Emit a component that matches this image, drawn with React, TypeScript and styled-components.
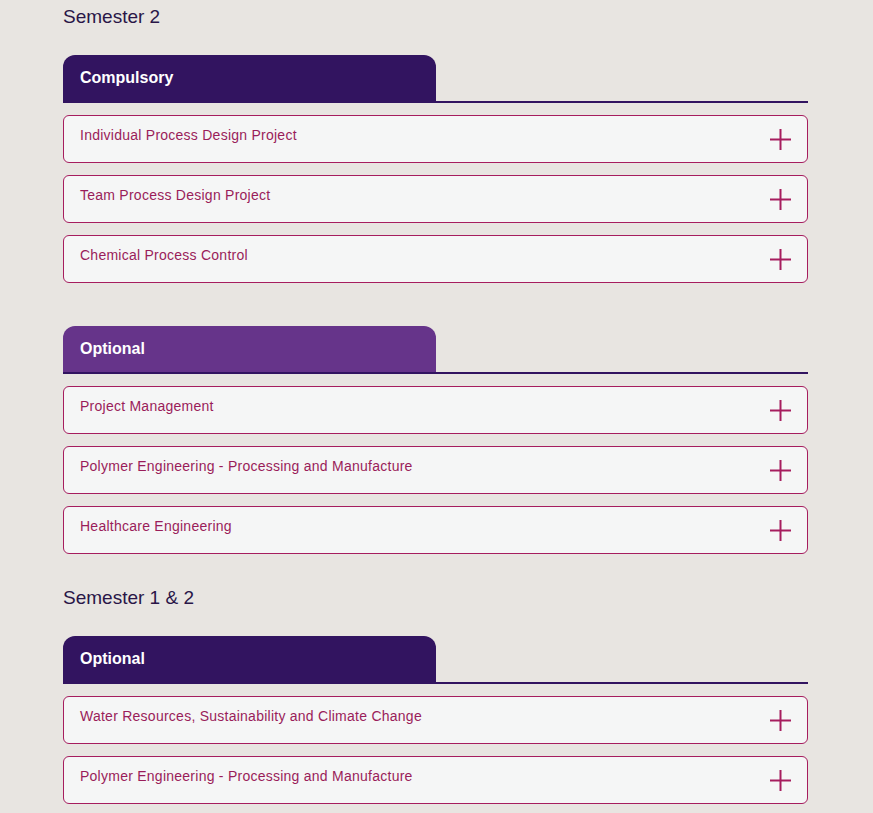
import React from "react";
import styled, { createGlobalStyle } from "styled-components";

const GlobalStyle = createGlobalStyle`
  html, body { margin: 0; padding: 0; background: #e8e5e1; }
  body { font-family: "Liberation Sans", Arial, sans-serif; }
`;

const Page = styled.div`
  width: 745px;
  padding: 5px 0 0 63px;
`;

const SemesterTitle = styled.h2`
  margin: 0 0 26px;
  font-size: 19px;
  line-height: 24px;
  font-weight: 400;
  color: #2a1648;
`;

const Group = styled.section<{ $gapBelow: number }>`
  margin-bottom: ${(p) => p.$gapBelow}px;
`;

const TabBar = styled.div<{ $color: string }>`
  display: flex;
  border-bottom: 2px solid ${(p) => p.$color};
  margin-bottom: 12px;
`;

const Tab = styled.div<{ $color: string }>`
  width: 373px;
  height: 46px;
  box-sizing: border-box;
  padding: 0 0 0 17px;
  display: flex;
  align-items: center;
  background: ${(p) => p.$color};
  border-radius: 12px 12px 0 0;
  color: #ffffff;
  font-weight: 700;
  font-size: 16px;
`;

const ItemList = styled.div`
  display: flex;
  flex-direction: column;
  gap: 12px;
`;

const Item = styled.div`
  height: 48px;
  box-sizing: border-box;
  border: 1px solid #a61d5e;
  border-radius: 6px;
  background: #f5f6f6;
  display: flex;
  justify-content: space-between;
  padding: 0 16px 0 16px;
`;

const ItemLabel = styled.span`
  padding-top: 9px;
  line-height: 20px;
  font-size: 14px;
  letter-spacing: 0.25px;
  color: #9a1d5a;
`;

const PlusWrap = styled.span`
  display: flex;
  align-items: center;
`;

const Plus = () => (
  <PlusWrap>
    <svg width="21" height="21" viewBox="0 0 21 21">
      <rect x="0" y="9.5" width="21" height="2" fill="#a61d5e" />
      <rect x="9.5" y="0" width="2" height="21" fill="#a61d5e" />
    </svg>
  </PlusWrap>
);

type GroupData = { label: string; color: string; items: string[]; gap: number };
type Semester = { title: string; groups: GroupData[] };

const DARK = "#321460";
const LIGHT = "#66348a";

const data: Semester[] = [
  {
    title: "Semester 2",
    groups: [
      {
        label: "Compulsory",
        color: DARK,
        gap: 43,
        items: [
          "Individual Process Design Project",
          "Team Process Design Project",
          "Chemical Process Control",
        ],
      },
      {
        label: "Optional",
        color: LIGHT,
        gap: 32,
        items: [
          "Project Management",
          "Polymer Engineering - Processing and Manufacture",
          "Healthcare Engineering",
        ],
      },
    ],
  },
  {
    title: "Semester 1 & 2",
    groups: [
      {
        label: "Optional",
        color: DARK,
        gap: 20,
        items: [
          "Water Resources, Sustainability and Climate Change",
          "Polymer Engineering - Processing and Manufacture",
        ],
      },
    ],
  },
];

export default function App() {
  return (
    <>
      <GlobalStyle />
      <Page>
        {data.map((sem) => (
          <div key={sem.title}>
            <SemesterTitle>{sem.title}</SemesterTitle>
            {sem.groups.map((g, i) => (
              <Group key={i} $gapBelow={g.gap}>
                <TabBar $color={DARK}>
                  <Tab $color={g.color}>{g.label}</Tab>
                </TabBar>
                <ItemList>
                  {g.items.map((it, j) => (
                    <Item key={j}>
                      <ItemLabel>{it}</ItemLabel>
                      <Plus />
                    </Item>
                  ))}
                </ItemList>
              </Group>
            ))}
          </div>
        ))}
      </Page>
    </>
  );
}
